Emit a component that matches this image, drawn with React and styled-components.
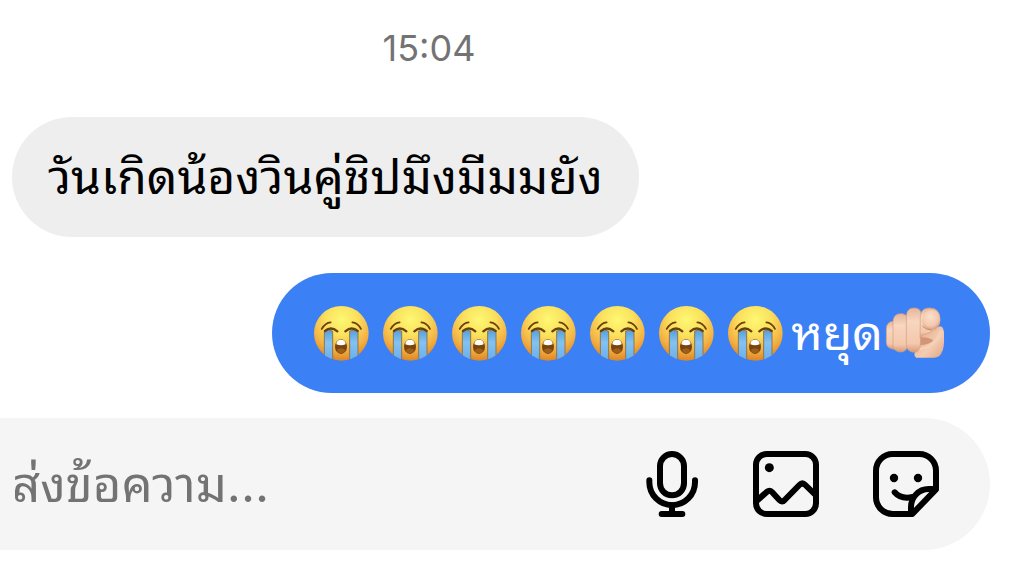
import React from 'react';
import styled, { createGlobalStyle } from 'styled-components';

const GlobalStyle = createGlobalStyle`
  * {
    box-sizing: border-box;
  }

  body {
    margin: 0;
    background: #ffffff;
    font-family: Inter, "Noto Sans Thai Looped", Loma, "Noto Sans Thai", "Noto Sans", sans-serif;
  }
`

const Chat = styled.main`
  display: flex;
  flex-direction: column;
  padding-right: 24px;
`

const Time = styled.time`
  padding: 24px 132px 0 0;
  text-align: center;
  font-size: 36px;
  line-height: 49px;
  color: #737373;
`

const Messages = styled.div`
  display: flex;
  flex-direction: column;
  gap: 36px;
  padding: 44px 0 25px 12px;
`

const Bubble = styled.div`
  display: flex;
  align-items: center;
  align-self: ${(props) => (props.$mine ? 'flex-end' : 'flex-start')};
  min-height: 120px;
  padding: 0 36px;
  border-radius: 60px;
  font-size: 48px;
  line-height: 72px;
  white-space: nowrap;
  color: ${(props) => (props.$mine ? '#ffffff' : '#000000')};
  background: ${(props) => (props.$mine ? '#3b80f5' : '#eeeeee')};
`

const Face = styled.svg`
  flex: none;
  width: 55px;
  height: 55px;
  margin: 0 8px 0 6px;
`

const Hand = styled.svg`
  flex: none;
  width: 61px;
  height: 54px;
  margin: 0 8px 0 2px;
`

const Composer = styled.form`
  display: flex;
  align-items: center;
  gap: 54px;
  min-height: 132px;
  padding: 0 51px 0 12px;
  border-radius: 0 66px 66px 0;
  background: #f5f5f6;
`

const TextBox = styled.input`
  flex: 1;
  min-width: 0;
  height: 96px;
  padding: 0;
  border: none;
  outline: none;
  background: transparent;
  font-family: inherit;
  font-size: 49px;
  color: #000000;

  &::placeholder {
    color: #737373;
    opacity: 1;
  }
`

const IconButton = styled.button`
  display: flex;
  flex: none;
  padding: 0;
  border: none;
  background: none;
  color: #000000;
  cursor: pointer;
`

const Icon = styled.svg`
  width: ${(props) => props.$width || 66}px;
  height: 66px;
  fill: none;
  stroke: currentColor;
  stroke-width: 18;
  stroke-linecap: round;
  stroke-linejoin: round;
`

const CryingFace = () => (
  <Face viewBox="0 0 165 165" role="img" aria-label="😭">
    <defs>
      <radialGradient id="face" cx="0.5" cy="0.25" r="0.75">
        <stop offset="0" stopColor="#fdf873" />
        <stop offset="0.4" stopColor="#fbe05c" />
        <stop offset="0.75" stopColor="#f3b043" />
        <stop offset="1" stopColor="#dc8526" />
      </radialGradient>
      <linearGradient id="tear" x1="0" y1="0" x2="0" y2="1">
        <stop offset="0" stopColor="#559fdc" />
        <stop offset="0.4" stopColor="#83c2f2" />
        <stop offset="1" stopColor="#68aeea" />
      </linearGradient>
      <clipPath id="round">
        <circle cx="82" cy="82" r="82" />
      </clipPath>
    </defs>
    <circle cx="82" cy="82" r="82" fill="url(#face)" />
    <g clipPath="url(#round)">
      <path d="M31 75Q43 70 56 75V165H31Z" fill="url(#tear)" stroke="#8c7650" strokeWidth="3" />
      <path d="M107 75Q120 70 132 75V165H107Z" fill="url(#tear)" stroke="#8c7650" strokeWidth="3" />
    </g>
    <g fill="none" stroke="#68400c" strokeLinecap="round">
      <path d="M23 69Q34 50 50 49" strokeWidth="5" />
      <path d="M115 49Q131 50 141 69" strokeWidth="5" />
      <path d="M33 75Q51 60 70 76" strokeWidth="7" />
      <path d="M94 76Q113 60 131 75" strokeWidth="7" />
    </g>
    <ellipse cx="81" cy="122" rx="18" ry="22" fill="#7b430b" />
    <path d="M67 115Q67 101 81 101Q95 101 95 115Q81 121 67 115Z" fill="#ffffff" />
    <path d="M68 132Q81 121 94 132Q90 142 81 142Q72 142 68 132Z" fill="#9a611c" />
  </Face>
)

const PointingHand = () => (
  <Hand viewBox="438 142 183 162" role="img" aria-label="🫵🏻">
    <defs>
      <linearGradient id="finger" x1="0" y1="0" x2="0" y2="1">
        <stop offset="0" stopColor="#e6b598" />
        <stop offset="0.3" stopColor="#f8d6c0" />
        <stop offset="0.8" stopColor="#f3c8ad" />
        <stop offset="1" stopColor="#d99a78" />
      </linearGradient>
      <radialGradient id="tip" cx="0.45" cy="0.35" r="0.7">
        <stop offset="0" stopColor="#fde0ce" />
        <stop offset="0.65" stopColor="#f3c8ae" />
        <stop offset="1" stopColor="#ce8f6f" />
      </radialGradient>
      <linearGradient id="thumb" x1="0" y1="0" x2="1" y2="1">
        <stop offset="0" stopColor="#dda383" />
        <stop offset="0.6" stopColor="#f5ccb1" />
        <stop offset="1" stopColor="#dfa586" />
      </linearGradient>
    </defs>
    <path d="M535 222L605 203Q616 207 615 230Q617 270 607 284Q600 297 586 297H531Q523 290 528 281Z" fill="url(#thumb)" />
    <path d="M543 236Q567 234 583 245Q572 258 542 260Z" fill="#d29575" />
    <path d="M533 269Q561 276 591 246Q601 233 606 216" fill="none" stroke="#f6d1b9" strokeWidth="8" />
    <g fill="url(#finger)" stroke="#d59f7f" strokeWidth="2">
      <path d="M464 188Q443 188 442 211V251Q442 270 466 272Z" />
      <path d="M462 192Q462 165 485 165Q505 164 505 183V259Q505 279 485 280Q464 279 462 260Z" />
      <path d="M502 171Q504 148 524 148Q546 147 547 169L544 260Q542 281 523 281Q504 278 502 260Z" />
      <path d="M544 170Q549 147 572 148Q602 148 603 180Q603 207 583 215Q569 225 550 230L543 238Z" />
    </g>
    <ellipse cx="577" cy="184" rx="27" ry="30" fill="url(#tip)" />
    <path d="M551 203Q560 214 577 214" fill="none" stroke="#c98765" strokeWidth="3" strokeLinecap="round" />
  </Hand>
)

const MicIcon = () => (
  <Icon $width={54} viewBox="45 47 162 198" aria-hidden="true">
    <rect x="90" y="56" width="72" height="124" rx="36" />
    <path d="M58 135V141A68.5 68.5 0 0 0 195 141V135" />
    <path d="M126 210V236M95 236H157" />
  </Icon>
)

const PhotoIcon = () => (
  <Icon viewBox="369 47 198 198" aria-hidden="true">
    <rect x="378" y="56" width="180" height="180" rx="32" />
    <circle cx="418" cy="97" r="13.5" fill="currentColor" stroke="none" />
    <path d="M379 198L411 169Q419 163 426 170L448 194Q456 203 464 194L508 149Q517 140 526 149L558 180" />
  </Icon>
)

const StickerIcon = () => (
  <Icon viewBox="69 123 198 198" aria-hidden="true">
    <path d="M258 238V182A50 50 0 0 0 208 132H128A50 50 0 0 0 78 182V262A50 50 0 0 0 128 312H187Z" />
    <path d="M257 237H236C205 237 183 263 183 291V311" />
    <path d="M134 247Q153 269 188 261" />
    <circle cx="132" cy="204" r="12.5" fill="currentColor" stroke="none" />
    <circle cx="204" cy="204" r="12.5" fill="currentColor" stroke="none" />
  </Icon>
)

const App = () => {
  return (
    <Chat>
      <GlobalStyle />
      <Time>15:04</Time>
      <Messages>
        <Bubble>วันเกิดน้องวินคู่ชิปมึงมีมมยัง</Bubble>
        <Bubble $mine>
          {[1, 2, 3, 4, 5, 6, 7].map((n) => (
            <CryingFace key={n} />
          ))}
          <span>หยุด</span>
          <PointingHand />
        </Bubble>
      </Messages>
      <Composer onSubmit={(e) => e.preventDefault()}>
        <TextBox type="text" aria-label="ส่งข้อความ" placeholder="ส่งข้อความ..." />
        <IconButton type="button" aria-label="Voice message">
          <MicIcon />
        </IconButton>
        <IconButton type="button" aria-label="Photo">
          <PhotoIcon />
        </IconButton>
        <IconButton type="button" aria-label="Sticker">
          <StickerIcon />
        </IconButton>
      </Composer>
    </Chat>
  )
}

export default App
